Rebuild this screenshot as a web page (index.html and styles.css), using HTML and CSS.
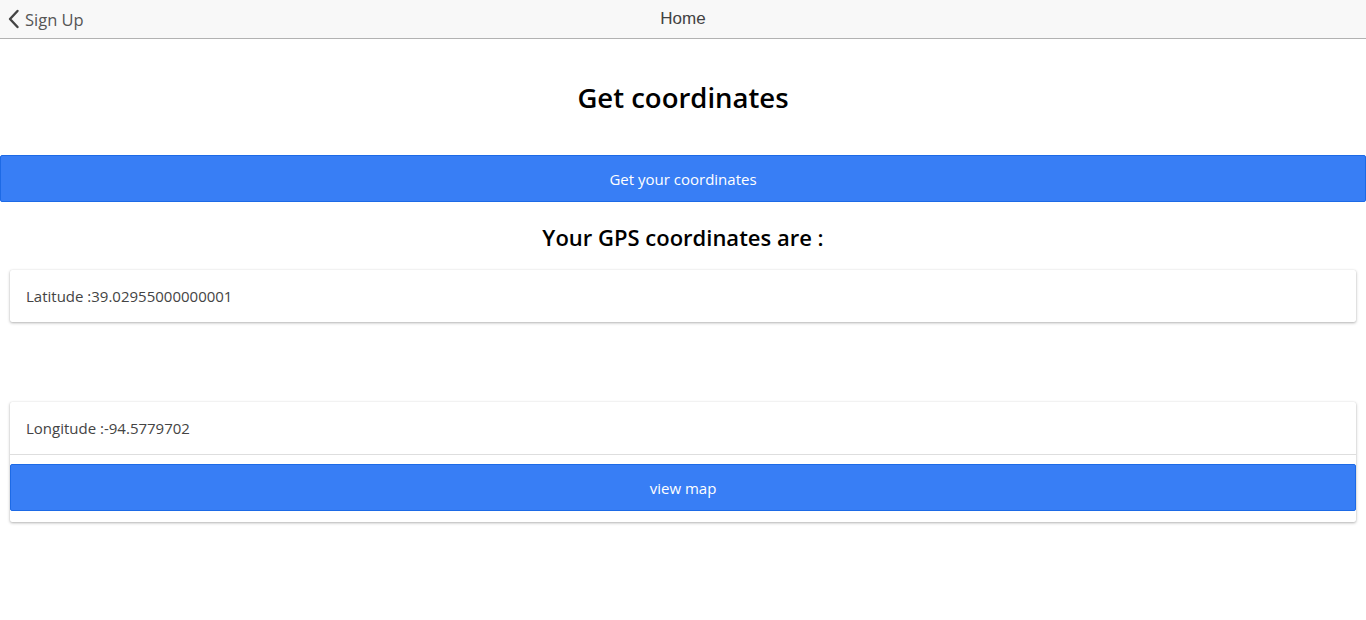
FILE: index.html
```html
<!DOCTYPE html>
<html>
<head>
<meta charset="utf-8">
<link rel="stylesheet" href="styles.css">
</head>
<body>
<header class="toolbar">
  <button class="back">
    <svg class="chev" width="13" height="20" viewBox="0 0 13 20"><path d="M10.5 2 L3 10 L10.5 18" fill="none" stroke="#444" stroke-width="2.4" stroke-linecap="round" stroke-linejoin="round"/></svg>
    <span>Sign Up</span>
  </button>
  <div class="title">Home</div>
</header>
<main class="content">
  <h1 class="h1">Get coordinates</h1>
  <button class="btn btn-full">Get your coordinates</button>
  <h2 class="h2">Your GPS coordinates are :</h2>
  <div class="card">
    <div class="item">Latitude :39.02955000000001</div>
  </div>
  <div class="card card-second">
    <div class="item item-border">Longitude :-94.5779702</div>
    <div class="card-actions">
      <button class="btn btn-block">view map</button>
    </div>
  </div>
</main>
</body>
</html>
```
FILE: styles.css
```css
* { box-sizing: border-box; }
html, body { margin: 0; padding: 0; background: #fff; }
body { font-family: "Open Sans", "Noto Sans", sans-serif; color: #000; }
.toolbar {
  height: 39px;
  background: #f8f8f8;
  border-bottom: 1px solid #b2b2b2;
  display: grid;
  grid-template-columns: 1fr auto 1fr;
  align-items: center;
}
.back {
  justify-self: start;
  display: flex;
  align-items: center;
  gap: 5px;
  background: none;
  border: 0;
  padding: 0 0 0 7px;
  font-family: "Open Sans", sans-serif;
  font-size: 16.5px;
  color: #555;
  height: 38px;
}
.chev { display: block; }
.title {
  font-family: "Liberation Sans", Arial, sans-serif;
  font-size: 17px;
  font-weight: 500;
  color: #424242;
}
.content { padding: 0 0 40px; }
.h1 {
  margin: 0;
  padding-top: 43px;
  height: 116px;
  text-align: center;
  font-size: 27.5px;
  font-weight: 600;
  line-height: 32px;
}
.btn {
  background: #387ef5;
  border: 1px solid #1d6ae6;
  border-radius: 2px;
  color: #fff;
  font-family: "Open Sans", sans-serif;
  font-size: 15px;
  height: 47px;
  display: block;
  margin: 0;
}
.btn-full { width: 100%; }
.h2 {
  margin: 0;
  padding-top: 20px;
  height: 68px;
  text-align: center;
  font-size: 22px;
  font-weight: 600;
  line-height: 30px;
}
.card {
  margin: 0 10px;
  background: #fff;
  border-radius: 2px;
  box-shadow: 0 1px 3px rgba(0,0,0,0.3), 0 0 1px rgba(0,0,0,0.12);
}
.card-second { margin-top: 80px; }
.item {
  height: 52px;
  padding: 0 16px;
  display: flex;
  align-items: center;
  font-size: 15px;
  color: #444;
}
.item-border { border-bottom: 1px solid #dedede; height: 53px; }
.card-actions { padding: 9px 0 11px; display: flow-root; }
.btn-block { width: 100%; }
```
